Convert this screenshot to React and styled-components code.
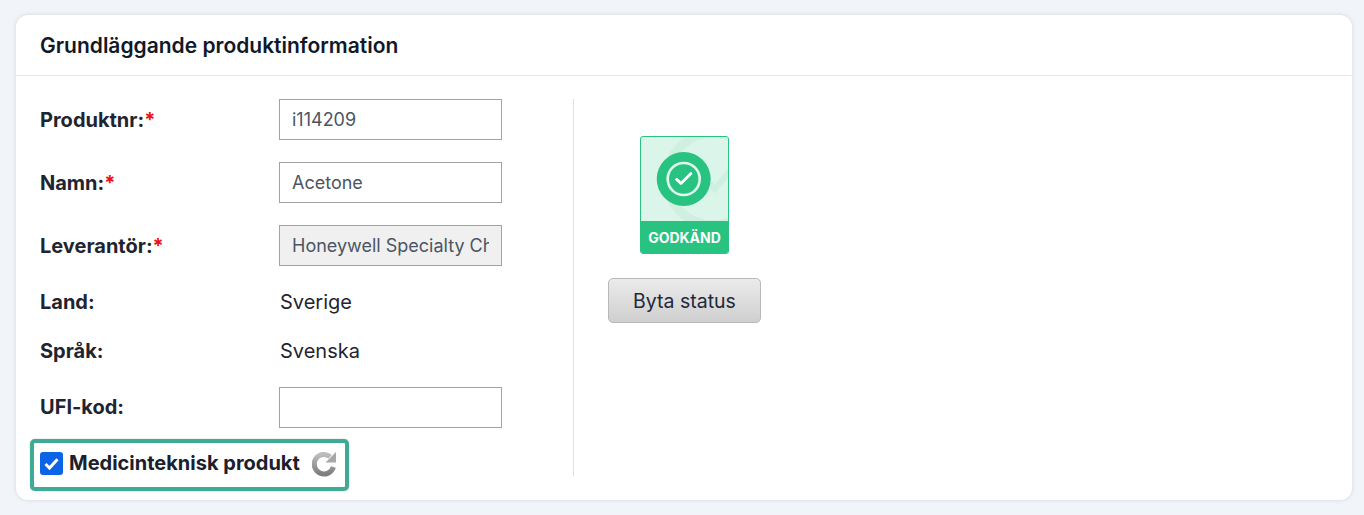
import React from "react";
import styled, { createGlobalStyle } from "styled-components";

const Global = createGlobalStyle`
  html, body { margin: 0; padding: 0; background: #f1f4f8; }
  body { font-family: Inter, "Liberation Sans", sans-serif; color: #1a202c; }
  * { box-sizing: border-box; }
`;
const Page = styled.div`
  padding: 15px 12px 15px 16px;
  height: 515px;
`;
const Card = styled.section`
  background: #fff;
  border-radius: 12px;
  height: 485px;
  box-shadow: 0 0 4px rgba(30, 40, 60, 0.14);
`;
const Header = styled.header`
  height: 61px;
  padding: 0 24px;
  display: flex;
  align-items: center;
  border-bottom: 1px solid #e3e7ee;
`;
const Title = styled.h2`
  margin: 0;
  font-size: 21px;
  font-weight: 600;
  color: #111827;
`;
const Body = styled.div`
  display: flex;
  padding: 23px 24px 24px;
`;
const FormColumn = styled.div`
  width: 534px;
  height: 377px;
  border-right: 1px solid #dfdfdf;
  display: flex;
  flex-direction: column;
`;
const Row = styled.div`
  display: grid;
  flex-shrink: 0;
  grid-template-columns: 239px 223px;
  align-items: center;
  height: ${(p) => p.$h}px;
  margin-bottom: ${(p) => p.$mb}px;
`;
const Label = styled.label`
  font-size: 20px;
  font-weight: 700;
  color: #1f2530;
  padding-bottom: ${(p) => p.$lift || 0}px;
`;
const Star = styled.span`
  color: #ee1111;
`;
const Input = styled.input`
  width: 223px;
  height: 41px;
  padding: 0 12px;
  border: 1px solid #a3a3a3;
  border-radius: 0;
  font: 400 18px Inter, sans-serif;
  color: #4b5563;
  background: ${(p) => (p.disabled ? "#f0f0f0" : "#fff")};
  outline: none;
  opacity: 1;
`;
const Value = styled.span`
  font-size: 20px;
  color: #1f2530;
  padding-left: 1px;
`;
const Highlight = styled.div`
  display: flex;
  flex-shrink: 0;
  align-items: center;
  width: 319px;
  height: 52px;
  margin-left: -10px;
  padding: 0 0 3px 6px;
  border: 4px solid #3faa95;
  border-radius: 5px;
  box-shadow: 0 0 1px rgba(0, 0, 0, 0.55);
`;
const Check = styled.span`
  width: 23px;
  height: 23px;
  border-radius: 3px;
  background: #0b63e5;
  display: flex;
  align-items: center;
  justify-content: center;
  margin-right: 6px;
`;
const CheckText = styled.span`
  font-size: 20px;
  font-weight: 700;
  color: #1a202c;
  padding-bottom: 2px;
`;
const Refresh = styled.svg`
  margin-left: 11px;
  display: block;
`;
const StatusColumn = styled.div`
  width: 153px;
  margin-left: 34px;
  display: flex;
  flex-direction: column;
  align-items: center;
  padding-top: 37px;
`;
const Badge = styled.div`
  width: 89px;
  height: 118px;
  border: 1px solid #28c381;
  border-radius: 3px;
  background: #dcf5ea;
  overflow: hidden;
`;
const BadgeArt = styled.svg`
  display: block;
  width: 87px;
  height: 84px;
`;
const BadgeLabel = styled.div`
  height: 33px;
  background: #28c381;
  color: #fff;
  font-size: 14px;
  font-weight: 700;
  display: flex;
  align-items: center;
  justify-content: center;
`;
const Button = styled.button`
  width: 153px;
  height: 45px;
  margin-top: 24px;
  border: 1px solid #b8b8b8;
  border-radius: 5px;
  background: linear-gradient(#ebebeb, #cfcfcf);
  font: 400 19.5px Inter, sans-serif;
  color: #1e293b;
`;

export default function App() {
  return (
    <Page>
      <Global />
      <Card>
        <Header>
          <Title>Grundläggande produktinformation</Title>
        </Header>
        <Body>
          <FormColumn>
            <Row $h={41} $mb={22}>
              <Label>Produktnr:<Star>*</Star></Label>
              <Input defaultValue="i114209" />
            </Row>
            <Row $h={41} $mb={22}>
              <Label>Namn:<Star>*</Star></Label>
              <Input defaultValue="Acetone" />
            </Row>
            <Row $h={41} $mb={22}>
              <Label>Leverantör:<Star>*</Star></Label>
              <Input disabled defaultValue="Honeywell Specialty Chemicals" />
            </Row>
            <Row $h={27} $mb={22}>
              <Label>Land:</Label>
              <Value>Sverige</Value>
            </Row>
            <Row $h={27} $mb={23}>
              <Label>Språk:</Label>
              <Value>Svenska</Value>
            </Row>
            <Row $h={41} $mb={11}>
              <Label $lift={2}>UFI-kod:</Label>
              <Input />
            </Row>
            <Highlight>
              <Check>
                <svg width="19" height="19" viewBox="0 0 19 19" fill="none">
                  <path d="M3.5 10 7.5 14 15.5 5.2" stroke="#fff" strokeWidth="3" />
                </svg>
              </Check>
              <CheckText>Medicinteknisk produkt</CheckText>
              <Refresh width="26" height="27" viewBox="0 0 26 27" fill="none">
                <defs>
                  <linearGradient id="rf" x1="0" y1="0" x2="0" y2="1">
                    <stop offset="0" stopColor="#bdbdbd" />
                    <stop offset="1" stopColor="#7e7e7e" />
                  </linearGradient>
                  <filter id="soft" x="-10%" y="-10%" width="120%" height="120%">
                    <feGaussianBlur stdDeviation="0.45" />
                  </filter>
                </defs>
                <g filter="url(#soft)">
                  <path d="M19.2 6.6A9.8 9.8 0 1 0 22.4 17" stroke="url(#rf)" strokeWidth="5" />
                  <path d="M25 2V12.5H14.5Z" fill="#a8a8a8" />
                </g>
              </Refresh>
            </Highlight>
          </FormColumn>
          <StatusColumn>
            <Badge>
              <BadgeArt viewBox="0 0 87 84" fill="none">
                <defs>
                  <filter id="glow" x="-20%" y="-20%" width="140%" height="140%">
                    <feGaussianBlur stdDeviation="0.35" />
                  </filter>
                </defs>
                <circle cx="72" cy="42" r="46" stroke="#cfefe1" strokeWidth="9" />
                <path d="M69 46 74 52 92 30" stroke="#cfefe1" strokeWidth="6" />
                <circle cx="42.7" cy="42" r="27" fill="#28c381" />
                <g filter="url(#glow)">
                  <circle cx="42.7" cy="42" r="16" stroke="#e2f8ee" strokeWidth="2.6" />
                  <path d="M35.6 42.4 39.9 46.4 50 36.6" stroke="#fff" strokeWidth="2.8" strokeLinecap="round" strokeLinejoin="round" />
                </g>
              </BadgeArt>
              <BadgeLabel>GODKÄND</BadgeLabel>
            </Badge>
            <Button>Byta status</Button>
          </StatusColumn>
        </Body>
      </Card>
    </Page>
  );
}
